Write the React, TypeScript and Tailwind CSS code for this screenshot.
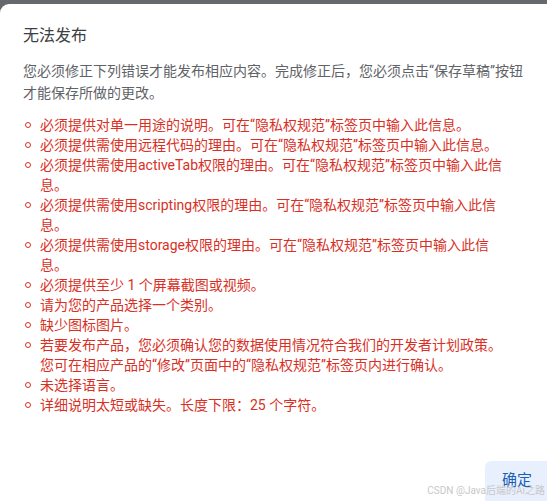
import React from 'react'

const errors: string[][] = [
    ['必须提供对单一用途的说明。可在“隐私权规范”标签页中输入此信息。'],
    ['必须提供需使用远程代码的理由。可在“隐私权规范”标签页中输入此信息。'],
    ['必须提供需使用activeTab权限的理由。可在“隐私权规范”标签页中输入此信', '息。'],
    ['必须提供需使用scripting权限的理由。可在“隐私权规范”标签页中输入此信', '息。'],
    ['必须提供需使用storage权限的理由。可在“隐私权规范”标签页中输入此信', '息。'],
    ['必须提供至少 1 个屏幕截图或视频。'],
    ['请为您的产品选择一个类别。'],
    ['缺少图标图片。'],
    ['若要发布产品，您必须确认您的数据使用情况符合我们的开发者计划政策。', '您可在相应产品的“修改”页面中的“隐私权规范”标签页内进行确认。'],
    ['未选择语言。'],
    ['详细说明太短或缺失。长度下限：25 个字符。'],
]

const App: React.FC = () => {
    return (
        <div
            className='w-[547px] h-[501px] overflow-hidden bg-[#65696d] pt-[4px]'
            style={{ fontFamily: "Roboto, 'Noto Sans CJK SC', sans-serif" }}
        >
            <div className='relative h-full bg-white rounded-tl-[9px] flex flex-col'>
                <div className='pl-[23px] pr-[24px] pt-[21px]'>
                    <h2 className='text-[16px] leading-[22px] text-[#3c4043]'>无法发布</h2>
                    <p className='mt-[13px] text-[14px] leading-[22px] text-[#5f6368]'>
                        您必须修正下列错误才能发布相应内容。完成修正后，您必须点击“保存草稿”按钮才能保存所做的更改。
                    </p>
                    <ul className='mt-[11px] text-[14px] leading-[20px] text-[#d93025]'>
                        {errors.map((lines, i) => (
                            <li key={i} className='flex'>
                                <span className='w-[17px] shrink-0 flex pt-[7px] pl-[2px]'>
                                    <span className='w-[6px] h-[6px] rounded-full border border-[#d93025]' />
                                </span>
                                <span>
                                    {lines.map((l, j) => (
                                        <span key={j} className='block'>{l}</span>
                                    ))}
                                </span>
                            </li>
                        ))}
                    </ul>
                </div>
                <div className='mt-auto flex justify-end'>
                    <button className='w-[62px] h-[40px] bg-[#e8f0fe] rounded-tl-[6px] text-[15px] text-[#1a5fb4] flex items-center justify-center pb-[2px] pl-[2px]'>
                        确定
                    </button>
                </div>
                <span className='absolute right-[2px] bottom-[4px] text-[10px] leading-[12px] text-[#c8c8c8]'>
                    CSDN @Java后端的Ai之路
                </span>
            </div>
        </div>
    )
}

export default App
